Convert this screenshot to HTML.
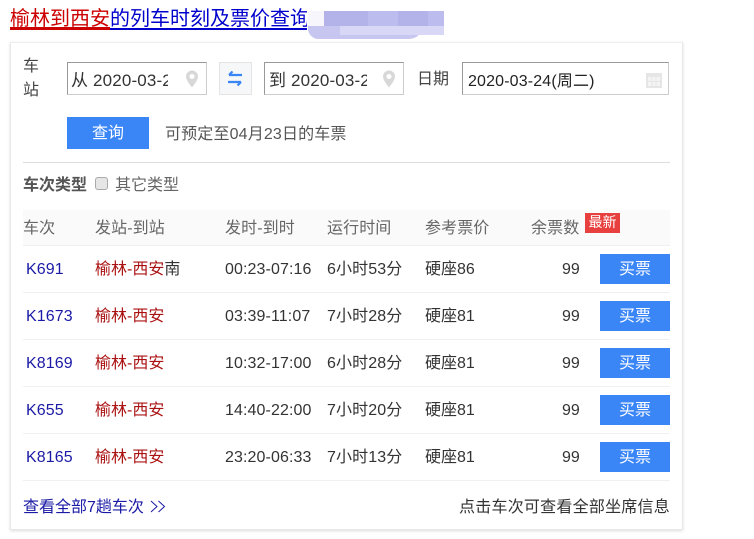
<!DOCTYPE html>
<html>
<head>
<meta charset="utf-8">
<style>
html,body{margin:0;padding:0;background:#fff;width:754px;height:539px;overflow:hidden}
body{position:relative;font-family:"Liberation Sans","Noto Sans CJK SC",sans-serif;font-size:16px;color:#333}
.a{position:absolute;white-space:nowrap;line-height:20px}
.box{position:absolute;box-sizing:border-box;background:#fff;border:1px solid #ccc;border-top-color:#999;border-left-color:#999;height:33px;top:62px}
.hd{color:#666;top:219px;letter-spacing:.1px}
.k{color:#1a1aa6}
.r{color:#a11}
.btn{position:absolute;left:600px;width:70px;height:30px;background:#3b86f7;color:#fff;text-align:center;line-height:31px}
.ln{position:absolute;left:23px;width:647px;height:1px;background:#f0f0f0}
.t{letter-spacing:.1px}
.inp{font-size:17px;letter-spacing:.15px}
</style>
</head>
<body>
<div class="a" style="left:10px;top:6px;font-size:20px;line-height:26px;width:297px;overflow:hidden;color:#00c;height:24px"><span style="color:#c00">榆林到西安</span>的列车时刻及票价查询</div>
<div style="position:absolute;left:10px;top:27px;width:100px;height:3px;background:#c00"></div>
<div style="position:absolute;left:110px;top:28px;width:197px;height:2px;background:#00c"></div>

<div style="position:absolute;left:308px;top:25px;width:115px;height:14px;background:#c6c6f0;border-radius:0 0 24px 18px"></div>
<div style="position:absolute;left:340px;top:26px;width:104px;height:9px;background:#d8d8f6"></div>
<div style="position:absolute;left:324px;top:11px;width:120px;height:15px;background:#b3b3ea"></div>
<div style="position:absolute;left:368px;top:11px;width:30px;height:15px;background:#bcbcee"></div>
<div style="position:absolute;left:428px;top:11px;width:16px;height:15px;background:#bcbcee"></div>
<div style="position:absolute;left:308px;top:11px;width:16px;height:15px;background:#f6f6fc"></div>

<div style="position:absolute;left:10px;top:42px;width:673px;height:488px;box-sizing:border-box;border:1px solid #e8e8e8;border-top-color:#eee;box-shadow:0 1px 3px rgba(0,0,0,.14)"></div>

<div class="a" style="left:23px;top:55px;line-height:24px;color:#444;white-space:normal;width:18px">车<br>站</div>

<div class="box" style="left:67px;width:140px"></div>
<div class="a inp" style="left:71px;top:71px;width:97px;overflow:hidden;color:#333">从 2020-03-24</div>
<svg style="position:absolute;left:185px;top:70px" width="14" height="18" viewBox="0 0 14 18"><path fill-rule="evenodd" fill="#d8d8d8" d="M7 0.5a6 6 0 0 1 6 6c0 3.6-3.6 7.6-6 11-2.400-3.400-6-7.400-6-11a6 6 0 0 1 6-6zM7 4a2.500 2.500 0 1 0 0 5 2.500 2.500 0 0 0 0-5z"/></svg>

<div style="position:absolute;left:219px;top:62px;width:33px;height:33px;box-sizing:border-box;background:#f6f7f9;border:1px solid #e4e4e4"></div>
<svg style="position:absolute;left:227px;top:71px" width="16" height="16" viewBox="0 0 16 16" fill="none" stroke="#3b86f7" stroke-width="2.200"><path d="M15 4H2M5.500 0.500L2 4"/><path d="M1 11H14M10.500 14.500L14 11"/></svg>

<div class="box" style="left:264px;width:140px"></div>
<div class="a inp" style="left:269px;top:71px;width:98px;overflow:hidden;color:#333">到 2020-03-24</div>
<svg style="position:absolute;left:382px;top:70px" width="14" height="18" viewBox="0 0 14 18"><path fill-rule="evenodd" fill="#d8d8d8" d="M7 0.500a6 6 0 0 1 6 6c0 3.600-3.600 7.600-6 11-2.400-3.400-6-7.400-6-11a6 6 0 0 1 6-6zM7 4a2.500 2.500 0 1 0 0 5 2.500 2.500 0 0 0 0-5z"/></svg>

<div class="a" style="left:417px;top:70px;color:#444">日期</div>
<div class="box" style="left:462px;width:207px"></div>
<div class="a" style="left:468px;top:72px;color:#222;letter-spacing:.15px">2020-03-24(周二)</div>
<svg style="position:absolute;left:646px;top:72px" width="16" height="16" viewBox="0 0 16 16"><rect x="0" y="1" width="16" height="15" fill="#e6e6e6"/><rect x="2" y="5" width="12" height="9" fill="#f4f4f4"/><path d="M6 5v9M10 5v9M2 9.500h12" stroke="#e6e6e6"/></svg>

<div class="btn" style="left:67px;top:117px;width:82px;height:32px;line-height:33px">查询</div>
<div class="a t" style="left:165px;top:125px;color:#555;letter-spacing:.15px">可预定至04月23日的车票</div>
<div style="position:absolute;left:23px;top:162px;width:647px;height:1px;background:#ddd"></div>

<div class="a" style="left:23px;top:176px;font-weight:bold;color:#555">车次类型</div>
<div style="position:absolute;left:95px;top:177px;width:13px;height:13px;box-sizing:border-box;background:#e6e6e6;border:1px solid #aaa;border-radius:3px"></div>
<div class="a" style="left:115px;top:176px;color:#666">其它类型</div>

<div style="position:absolute;left:23px;top:210px;width:647px;height:35px;background:#fafafa"></div>
<div class="ln" style="top:245px"></div>
<div class="a hd" style="left:23px">车次</div>
<div class="a hd" style="left:95px">发站-到站</div>
<div class="a hd" style="left:225px">发时-到时</div>
<div class="a hd" style="left:327px">运行时间</div>
<div class="a hd" style="left:425px">参考票价</div>
<div class="a hd" style="left:531px">余票数</div>
<div class="a" style="left:585px;top:213px;width:35px;height:20px;background:#e8403f;color:#fff;font-size:14px;line-height:19px;text-align:center">最新</div>

<div class="a k t" style="left:26px;top:260px">K691</div>
<div class="a" style="left:95px;top:260px"><span class="r">榆林-西安</span>南</div>
<div class="a t" style="left:225px;top:260px">00:23-07:16</div>
<div class="a t" style="left:327px;top:260px">6小时53分</div>
<div class="a" style="left:425px;top:260px">硬座86</div>
<div class="a" style="left:562px;top:260px">99</div>
<div class="btn" style="top:254px">买票</div>
<div class="ln" style="top:292px"></div>

<div class="a k t" style="left:26px;top:307px">K1673</div>
<div class="a" style="left:95px;top:307px"><span class="r">榆林-西安</span></div>
<div class="a t" style="left:225px;top:307px">03:39-11:07</div>
<div class="a t" style="left:327px;top:307px">7小时28分</div>
<div class="a" style="left:425px;top:307px">硬座81</div>
<div class="a" style="left:562px;top:307px">99</div>
<div class="btn" style="top:301px">买票</div>
<div class="ln" style="top:339px"></div>

<div class="a k t" style="left:26px;top:354px">K8169</div>
<div class="a" style="left:95px;top:354px"><span class="r">榆林-西安</span></div>
<div class="a t" style="left:225px;top:354px">10:32-17:00</div>
<div class="a t" style="left:327px;top:354px">6小时28分</div>
<div class="a" style="left:425px;top:354px">硬座81</div>
<div class="a" style="left:562px;top:354px">99</div>
<div class="btn" style="top:348px">买票</div>
<div class="ln" style="top:386px"></div>

<div class="a k t" style="left:26px;top:401px">K655</div>
<div class="a" style="left:95px;top:401px"><span class="r">榆林-西安</span></div>
<div class="a t" style="left:225px;top:401px">14:40-22:00</div>
<div class="a t" style="left:327px;top:401px">7小时20分</div>
<div class="a" style="left:425px;top:401px">硬座81</div>
<div class="a" style="left:562px;top:401px">99</div>
<div class="btn" style="top:395px">买票</div>
<div class="ln" style="top:433px"></div>

<div class="a k t" style="left:26px;top:448px">K8165</div>
<div class="a" style="left:95px;top:448px"><span class="r">榆林-西安</span></div>
<div class="a t" style="left:225px;top:448px">23:20-06:33</div>
<div class="a t" style="left:327px;top:448px">7小时13分</div>
<div class="a" style="left:425px;top:448px">硬座81</div>
<div class="a" style="left:562px;top:448px">99</div>
<div class="btn" style="top:442px">买票</div>
<div class="ln" style="top:480px"></div>

<div class="a k" style="left:23px;top:498px">查看全部7趟车次</div>
<svg style="position:absolute;left:150px;top:500px" width="16" height="13" viewBox="0 0 16 13" fill="none" stroke="#1a1aa6"><path d="M1 1l6 5.500-6 5.500M8.500 1l6 5.500-6 5.500"/></svg>
<div class="a" style="left:459px;top:498px;color:#333;letter-spacing:.23px">点击车次可查看全部坐席信息</div>
</body>
</html>
